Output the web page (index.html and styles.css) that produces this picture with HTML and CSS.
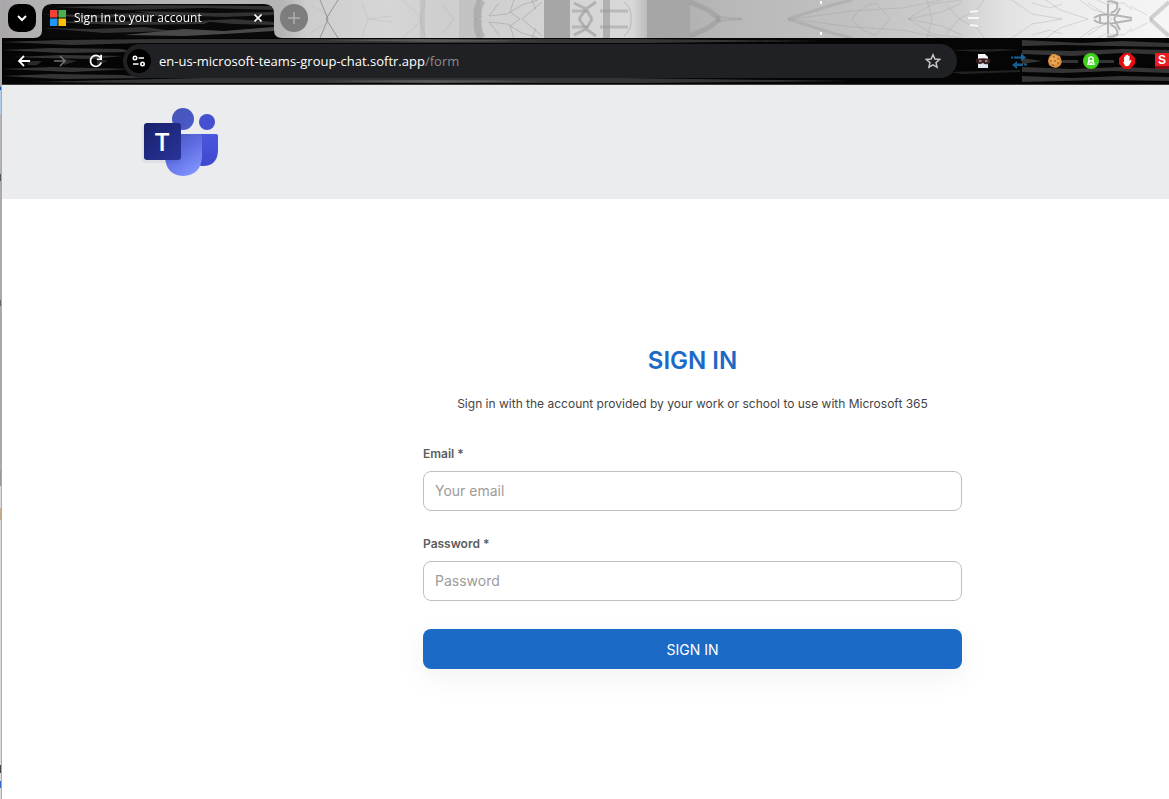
FILE: index.html
```html
<!DOCTYPE html>
<html lang="en">
<head>
    <meta charset="UTF-8">
    <meta name="viewport" content="width=device-width, initial-scale=1.0">
    <title>Sign in to your account</title>
    <link rel="stylesheet" href="styles.css">
</head>
<body>
    <div class="desktop-edge"></div>
    <div class="browser">
        <div class="tab-strip">
            <svg class="texture" viewBox="0 0 1167 38" preserveAspectRatio="none" aria-hidden="true">
                <defs>
                    <linearGradient id="sky" x1="0" x2="1" y1="0" y2="0">
                        <stop offset="0" stop-color="#aaa6aa"/>
                        <stop offset=".02" stop-color="#b2b2b2"/>
                        <stop offset=".24" stop-color="#b5b5b5"/>
                        <stop offset=".26" stop-color="#cdcdcd"/>
                        <stop offset=".33" stop-color="#d6d6d6"/>
                        <stop offset=".38" stop-color="#cecece"/>
                        <stop offset=".54" stop-color="#d8d8d8"/>
                        <stop offset=".56" stop-color="#acacac"/>
                        <stop offset=".62" stop-color="#b8b8b8"/>
                        <stop offset=".72" stop-color="#c0c0c0"/>
                        <stop offset=".82" stop-color="#cfcfcf"/>
                        <stop offset=".86" stop-color="#e2e2e2"/>
                        <stop offset=".9" stop-color="#ebebeb"/>
                        <stop offset="1" stop-color="#f6f6f6"/>
                    </linearGradient>
                    <g id="branches" fill="none" stroke="#999">
                        <path d="M318 0L326 19M336 0L324 19" stroke="#888" opacity=".8"/>
                        <path d="M308 5L326 15M360 2L366 19L390 16M400 0L412 10L420 19M424 0L418 19M440 4L452 19" opacity=".2"/>
                        <path d="M480 0Q474 8 476 19" stroke-width="8" opacity=".5"/>
                        <path d="M497 3L487 16L505 14L520 5L536 0M512 0L508 12L518 19M540 2L520 19M530 0L534 10" opacity=".5"/>
                        <path d="M572 3L584 9 577 19M594 2L584 9 590 19" stroke-width="3" opacity=".6"/>
                        <path d="M570 11H586M598 11H626" stroke-width="3" opacity=".5"/>
                        <path d="M622 2Q630 8 629 19" opacity=".5"/>
                        <path d="M688 2L706 10 718 19" stroke-width="5" opacity=".55"/>
                        <path d="M714 17L740 19" stroke-width="2" opacity=".4"/>
                        <path d="M786 19L830 5 850 0" stroke-width="3" opacity=".35"/>
                        <path d="M790 19L850 11L900 8L940 0M850 19Q858 6 874 3L888 19M906 19L930 4L960 0M906 19L940 12L960 3M925 0L930 19M944 4L957 19L975 10L982 0" opacity=".3"/>
                        <path d="M1010 0L1030 14L1060 19M1030 3L1048 8L1060 4M1044 0L1058 10L1086 19M1086 3L1100 12L1110 19M1095 0L1104 4L1122 3L1130 10M1128 6L1145 15M1078 0L1090 9L1104 14" opacity=".3"/>
                        <path d="M1148 19L1167 2" stroke-width="4" opacity=".4"/>
                        <path d="M1092 18Q1098 13 1112 15L1130 18M1105 2Q1109 0 1115 3Q1117 10 1109 13M1106 4V19M1118 8L1112 19M1098 14V19" stroke="#777" stroke-width="2" opacity=".5"/>
                    </g>
                    <filter id="soften"><feGaussianBlur stdDeviation=".7"/></filter>
                </defs>
                <rect width="1167" height="38" fill="url(#sky)"/>
                <g fill="#a6a6a6">
                    <rect x="457" width="22" height="38" opacity=".3"/>
                    <rect x="542" width="26" height="38"/>
                    <rect x="601" width="7" height="38" opacity=".8"/>
                    <rect x="645" width="43" height="38"/>
                    <rect x="418" width="5" height="38" opacity=".3"/>
                </g>
                <g filter="url(#soften)">
                    <use href="#branches"/>
                    <use href="#branches" transform="matrix(1 0 0 -1 0 38)"/>
                    <path d="M968 12l8-1M966 18h11M968 25l8 1" stroke="#fff" stroke-width="2" opacity=".8"/>
                </g>
                <path d="M819 1v3M819 32v3" stroke="#fff" stroke-width="2"/>
            </svg>
            <button class="tab-search" aria-label="Search tabs">
                <svg width="10" height="10" viewBox="0 0 10 10"><path d="M1 3l4 4 4-4" fill="none" stroke="#fff" stroke-width="2"/></svg>
            </button>
            <div class="tab">
                <svg class="tab-shape" viewBox="0 0 248 34" preserveAspectRatio="none" aria-hidden="true">
                    <defs>
                        <clipPath id="tab-clip"><path d="M0 34Q8 34 8 26V10Q8 0 18 0H230Q240 0 240 10V26Q240 34 248 34Z"/></clipPath>
                    </defs>
                    <g clip-path="url(#tab-clip)">
                        <rect width="248" height="34" fill="#090909"/>
                        <g fill="#303030" filter="url(#soften)">
                            <path d="M20 3L110 1 240 2V6L170 4 90 6Z"/>
                            <path d="M8 10L60 11 100 9 150 10 110 13 50 14Z"/>
                            <path d="M100 7L180 9 240 8V11L190 13 130 11Z"/>
                            <path d="M8 18L70 17 150 18 180 16 170 20 90 21Z"/>
                            <path d="M165 17L200 15 240 18V21L200 20Z"/>
                            <path d="M8 24L60 25 110 23 140 27 70 29Z"/>
                            <path d="M90 31L150 25 190 27 240 23V27L190 30 150 32Z" fill="#4a4a4a"/>
                        </g>
                    </g>
                </svg>
                <svg class="favicon" width="16" height="16" viewBox="0 0 16 16" aria-hidden="true">
                    <path fill="#f44336" d="M0 0h7.500v7.500H0z"/>
                    <path fill="#4caf50" d="M8.500 0H16v7.500H8.500z"/>
                    <path fill="#2196f3" d="M0 8.500h7.500V16H0z"/>
                    <path fill="#ffc107" d="M8.500 8.500H16V16H8.500z"/>
                </svg>
                <span class="tab-title">Sign in to your account</span>
                <button class="tab-close" aria-label="Close tab">
                    <svg width="8" height="8" viewBox="0 0 8 8"><path d="M.5.5l7 7M7.500.5l-7 7" stroke="#fff" stroke-width="1.600"/></svg>
                </button>
            </div>
            <button class="new-tab" aria-label="New tab">
                <svg width="12" height="12" viewBox="0 0 12 12"><path d="M6 0v12M0 6h12" stroke="#b0b0b0" stroke-width="1.500"/></svg>
            </button>
        </div>

        <div class="toolbar">
            <svg class="texture" viewBox="0 0 1167 46" preserveAspectRatio="none" aria-hidden="true">
                <rect width="1167" height="46" fill="#050505"/>
                <g fill="#353535" filter="url(#soften)">
                    <path d="M0 4L60 2 160 1H640L820 3 640 5H140L70 7Z"/>
                    <path d="M0 12L50 10 120 11 130 14 60 15Z"/>
                    <path d="M10 19L60 17 120 18 90 21 40 20Z"/>
                    <path d="M25 23H40L35 27H26ZM62 21L75 23 62 27ZM95 21L106 23 95 27Z" fill="#2b2b2b"/>
                    <path d="M0 31L50 29 130 31 70 34Z"/>
                    <path d="M0 38L50 36 120 37 150 40 60 41Z"/>
                    <path d="M30 44L200 40H620L850 43 640 45H140Z"/>
                    <path d="M945 12L1000 11 1018 12 980 14ZM948 34L1018 32V34L960 36Z" fill="#222"/>
                    <path d="M1020 2L1080 5 1120 3 1167 5V9L1110 8 1060 7 1020 8Z"/>
                    <path d="M1020 12L1070 13 1120 11 1167 12V17L1120 15 1070 18 1020 16Z"/>
                    <path d="M1020 20L1040 23 1020 26ZM1060 22H1076V25H1060ZM1095 22H1112V25H1095Z"/>
                    <path d="M1020 29L1070 31 1120 29 1167 31V35L1110 33 1060 35 1020 34Z"/>
                    <path d="M1020 38L1070 40 1120 38 1167 39V43L1100 42 1020 44Z"/>
                </g>
                <g filter="url(#soften)">
                    <path d="M320 2L420 1 540 3 430 4ZM320 43L420 42 540 43 430 45Z" fill="#585858"/>
                </g>
            </svg>
            <div class="nav">
                <button aria-label="Back">
                    <svg width="14" height="14" viewBox="0 0 14 14"><path d="M13 7H2M7 2L2 7l5 5" fill="none" stroke="#fff" stroke-width="1.800"/></svg>
                </button>
                <button aria-label="Forward">
                    <svg width="14" height="14" viewBox="0 0 14 14"><path d="M1 7h11M7 2l5 5-5 5" fill="none" stroke="#747474" stroke-width="1.600"/></svg>
                </button>
                <button aria-label="Reload">
                    <svg width="14" height="14" viewBox="0 0 14 14"><path d="M12.200 8.500A5.500 5.500 0 1 1 11.300 3.500L12.500 5" fill="none" stroke="#fff" stroke-width="1.800"/><path d="M13 .8V6H7.800V4.400h3.400V.8z" fill="#fff"/></svg>
                </button>
            </div>
            <div class="omnibox">
                <button class="site-info" aria-label="View site information">
                    <svg width="14" height="12" viewBox="0 0 14 12" fill="none" stroke="#fff" stroke-width="1.600"><circle cx="3" cy="3" r="1.700"/><path d="M6.500 3H12M1 9h5.500"/><circle cx="10.500" cy="9" r="1.700"/></svg>
                </button>
                <span class="url">en-us-microsoft-teams-group-chat.softr.app<span class="path">/form</span></span>
                <button class="bookmark" aria-label="Bookmark this tab">
                    <svg width="16" height="16" viewBox="0 0 16 16"><path d="M8 1.800l1.900 4.300 4.700.4-3.600 3.100 1.100 4.600L8 11.800l-4.100 2.400L5 9.600 1.400 6.500l4.700-.4z" fill="none" stroke="#c7c7c7" stroke-width="1.500"/></svg>
                </button>
            </div>
            <div class="extensions">
                <button aria-label="Masked file extension">
                    <svg width="16" height="16" viewBox="0 0 16 16"><path d="M3 1h7l3 3v10H3z" fill="#f5f5f7"/><path d="M3 10h10v5H3z" fill="#dfe5ee"/><path d="M1 6Q8 4.500 15 6q1 4-2 5-3 1-5-1-3 2-6 0Q0 8 1 6z" fill="#3c1f20"/><path d="M4 7.500h2.500v1H4zM10 7.500h2.500v1H10z" fill="#e8d9d9"/></svg>
                </button>
                <button aria-label="Redirect extension">
                    <svg width="16" height="16" viewBox="0 0 16 16"><path d="M3 3.500h7V0l5 4.500L10 8V5.500H3zM0 3.500h2v2H0z" fill="#1c6399"/><path d="M12 10.500H6V8L1 12l5 4v-3h6zM13 10.500h3v2h-3z" fill="#155d8a"/></svg>
                </button>
                <button aria-label="Cookie extension">
                    <svg width="16" height="16" viewBox="0 0 16 16"><path d="M8 1l2 1 3 1 1 3 1 3-2 4-4 2-4-1-3-2-1-4 1-4 3-3z" fill="#d98f3d"/><path d="M7 2l4 2 2 3-2 4-5 1-4-3 1-4z" fill="#eba956"/><g fill="#7a3f14"><circle cx="7" cy="4" r=".8"/><circle cx="11" cy="6" r=".8"/><circle cx="4" cy="8" r=".8"/><circle cx="8" cy="8" r=".8"/><circle cx="11" cy="10" r=".8"/><circle cx="6" cy="12" r=".8"/></g></svg>
                </button>
                <button aria-label="Lock extension">
                    <svg width="16" height="16" viewBox="0 0 16 16"><circle cx="8" cy="8" r="8" fill="#3ed31b"/><path d="M5.800 7.500V6a2.200 2.200 0 0 1 4.400 0v1.500" fill="none" stroke="#fff" stroke-width="1.300"/><path d="M5.500 7h5l1.500 5H4z" fill="#fff"/><path d="M6 11.500l2-3 2.500 3" fill="none" stroke="#3ed31b" stroke-width=".8"/></svg>
                </button>
                <button aria-label="Blocker extension">
                    <svg width="16" height="16" viewBox="0 0 16 16"><path d="M5 0h6l5 5v6l-5 5H5l-5-5V5z" fill="#e40d13"/><path d="M5 9V4q.7-1 1.300 0V2.500q.7-1 1.400 0V2q.7-1 1.400 0v1q.8-1 1.400 0V8l1.200-1q1 0 .8 1L10 12.500q-2 1.500-4 .2L4 9z" fill="#fff"/></svg>
                </button>
                <button aria-label="S extension">
                    <svg width="16" height="16" viewBox="0 0 16 16"><rect width="16" height="16" fill="#8d0b15"/><rect width="16" height="13" fill="#ec1c24"/><text x="7" y="11" text-anchor="middle" class="ext-letter">S</text></svg>
                </button>
            </div>
        </div>

        <header class="site-header">
            <a class="logo" href="#" aria-label="Teams home">
                <svg width="80" height="72" viewBox="0 0 80 72">
                    <defs>
                        <linearGradient id="body-front" x1="0" y1="0" x2=".6" y2="1">
                            <stop offset="0" stop-color="#4553bd"/>
                            <stop offset=".5" stop-color="#5c6be0"/>
                            <stop offset="1" stop-color="#7f91fc"/>
                        </linearGradient>
                        <linearGradient id="body-back" x1="0" y1="0" x2="0" y2="1">
                            <stop offset="0" stop-color="#4a58de"/>
                            <stop offset="1" stop-color="#3f47ce"/>
                        </linearGradient>
                        <linearGradient id="head" x1="0" y1="0" x2="1" y2="1">
                            <stop offset="0" stop-color="#4655b4"/>
                            <stop offset="1" stop-color="#4a5acb"/>
                        </linearGradient>
                        <linearGradient id="tile" x1="0" y1="0" x2="1" y2="1">
                            <stop offset="0" stop-color="#17206a"/>
                            <stop offset="1" stop-color="#29349a"/>
                        </linearGradient>
                    </defs>
                    <circle cx="65" cy="16" r="8" fill="#4450d0"/>
                    <path d="M50 28H74Q76 28 76 30V45Q75 60 61 60 54 60 50 55Z" fill="url(#body-back)"/>
                    <circle cx="41" cy="13" r="11" fill="url(#head)"/>
                    <path d="M23 28H57Q60 28 60 31V51Q59 69 41 70 24 69 23 51Z" fill="url(#body-front)"/>
                    <rect x="0" y="19" width="39" height="38" rx="3" fill="#26336e" opacity=".07"/>
                    <rect x="2" y="17" width="37" height="37" rx="3" fill="url(#tile)"/>
                    <text x="20" y="45" text-anchor="middle" class="logo-letter">T</text>
                </svg>
            </a>
        </header>

        <main class="page">
            <form class="sign-in">
                <h1>SIGN IN</h1>
                <p>Sign in with the account provided by your work or school to use with Microsoft 365</p>
                <div class="field">
                    <label for="email">Email *</label>
                    <input type="email" id="email" placeholder="Your email">
                </div>
                <div class="field">
                    <label for="password">Password *</label>
                    <input type="password" id="password" placeholder="Password">
                </div>
                <button type="submit" class="submit">SIGN IN</button>
            </form>
        </main>
    </div>
</body>
</html>
```

FILE: styles.css
```css
* {
    box-sizing: border-box;
}
body {
    display: flex;
    min-height: 100vh;
    margin: 0;
    background-color: #fff;
    font-family: Inter, "Liberation Sans", sans-serif;
    overflow: hidden;
}
button {
    display: flex;
    align-items: center;
    justify-content: center;
    flex: none;
    padding: 0;
    border: none;
    background: none;
    cursor: pointer;
}
.desktop-edge {
    width: 2px;
    border-right: 1px solid #aaa;
    background: linear-gradient(#aaa 0 87px, #1450c0 87px 90px, #b4cbea 90px 114px, #b5b1b5 114px 174px, #555 174px 181px, #aaa8ab 181px 300px, #666 300px 306px, #a8a8a8 306px 470px, #999 470px 486px, #dcdcdc 486px 508px, #c4ad91 508px 520px, #dcdcdc 520px 765px, #444 765px 773px, #ddd 773px 781px, #3467cc 781px 788px, #ddd 788px);
}
.browser {
    display: flex;
    flex: 1;
    flex-direction: column;
    min-width: 0;
}

/* window chrome */
.tab-strip,
.toolbar {
    display: flex;
    position: relative;
    z-index: 0;
    font-family: "Open Sans", "Noto Sans", sans-serif;
}
.texture {
    position: absolute;
    z-index: -1;
    top: 0;
    left: 0;
    width: 100%;
    height: 100%;
}
.tab-strip {
    align-items: flex-start;
    height: 38px;
    padding: 4px 6px 0;
}
.tab-search {
    width: 28px;
    height: 28px;
    border-radius: 10px;
    background-color: #000;
}
.tab {
    display: flex;
    position: relative;
    z-index: 0;
    align-items: center;
    width: 232px;
    height: 34px;
    margin: 0 6px;
    padding: 0 8px 6px;
}
.tab-shape {
    position: absolute;
    z-index: -1;
    top: 0;
    left: -8px;
    width: 248px;
    height: 34px;
}
.tab-title {
    flex: 1;
    margin-left: 8px;
    color: #fff;
    font-size: 12px;
    line-height: 20px;
    white-space: nowrap;
}
.tab-close {
    width: 16px;
    height: 16px;
}
.new-tab {
    width: 28px;
    height: 28px;
    border-radius: 50%;
    background-color: #7d7d7d;
}
.toolbar {
    align-items: center;
    height: 47px;
    border-bottom: 1px solid #3c3c3c;
    overflow: hidden;
}
.nav {
    display: flex;
    gap: 8px;
    padding: 0 13px 0 8px;
}
.nav button {
    width: 28px;
    height: 28px;
}
.omnibox {
    display: flex;
    flex: 1;
    align-items: center;
    height: 34px;
    min-width: 0;
    padding: 0 16px 0 4px;
    border-radius: 17px;
    background-color: #202124;
}
.site-info {
    width: 24px;
    height: 24px;
    border-radius: 50%;
    background-color: #000;
}
.url {
    flex: 1;
    margin-left: 8px;
    overflow: hidden;
    color: #fff;
    font-size: 13px;
    line-height: 20px;
    white-space: nowrap;
}
.path {
    color: #8b8b8b;
}
.extensions {
    display: flex;
    flex: none;
    gap: 20px;
    margin-right: -2px;
    padding-left: 18px;
}
.ext-letter {
    fill: #fff;
    font-family: "Liberation Sans", sans-serif;
    font-size: 12px;
    font-weight: 700;
}

/* site */
.site-header {
    height: 114px;
    padding: 21px 140px;
    background-color: #ebecee;
}
.logo {
    display: inline-block;
}
.logo svg {
    display: block;
}
.logo-letter {
    fill: #fff;
    font-family: "Open Sans", sans-serif;
    font-size: 26px;
    font-weight: 600;
}
.page {
    display: flex;
    justify-content: center;
    padding: 146px 0 40px 214px;
}
.sign-in {
    width: 100%;
    max-width: 539px;
}
.sign-in h1 {
    margin: 0 0 17px;
    color: #1b6ac6;
    font-size: 24px;
    font-weight: 600;
    line-height: 32px;
    text-align: center;
}
.sign-in p {
    margin: 0 0 31px;
    color: #444;
    font-size: 12px;
    line-height: 20px;
    text-align: center;
}
.field {
    display: flex;
    flex-direction: column;
    gap: 8px;
    margin-bottom: 24px;
}
.field label {
    color: #5c5c5c;
    font-size: 12px;
    font-weight: 600;
    line-height: 18px;
}
.field input {
    width: 100%;
    height: 40px;
    padding: 0 11px 2px;
    border: 1px solid #c0c0c0;
    border-radius: 8px;
    background-color: #fff;
    font-family: inherit;
    font-size: 14px;
}
.field input::placeholder {
    color: #9b9b9b;
}
.submit {
    width: 100%;
    height: 40px;
    margin-top: 28px;
    border-radius: 8px;
    background-color: #1b6ac6;
    box-shadow: 0 8px 30px rgba(0, 0, 0, 0.06);
    color: #fff;
    font-family: inherit;
    font-size: 14px;
}
```
